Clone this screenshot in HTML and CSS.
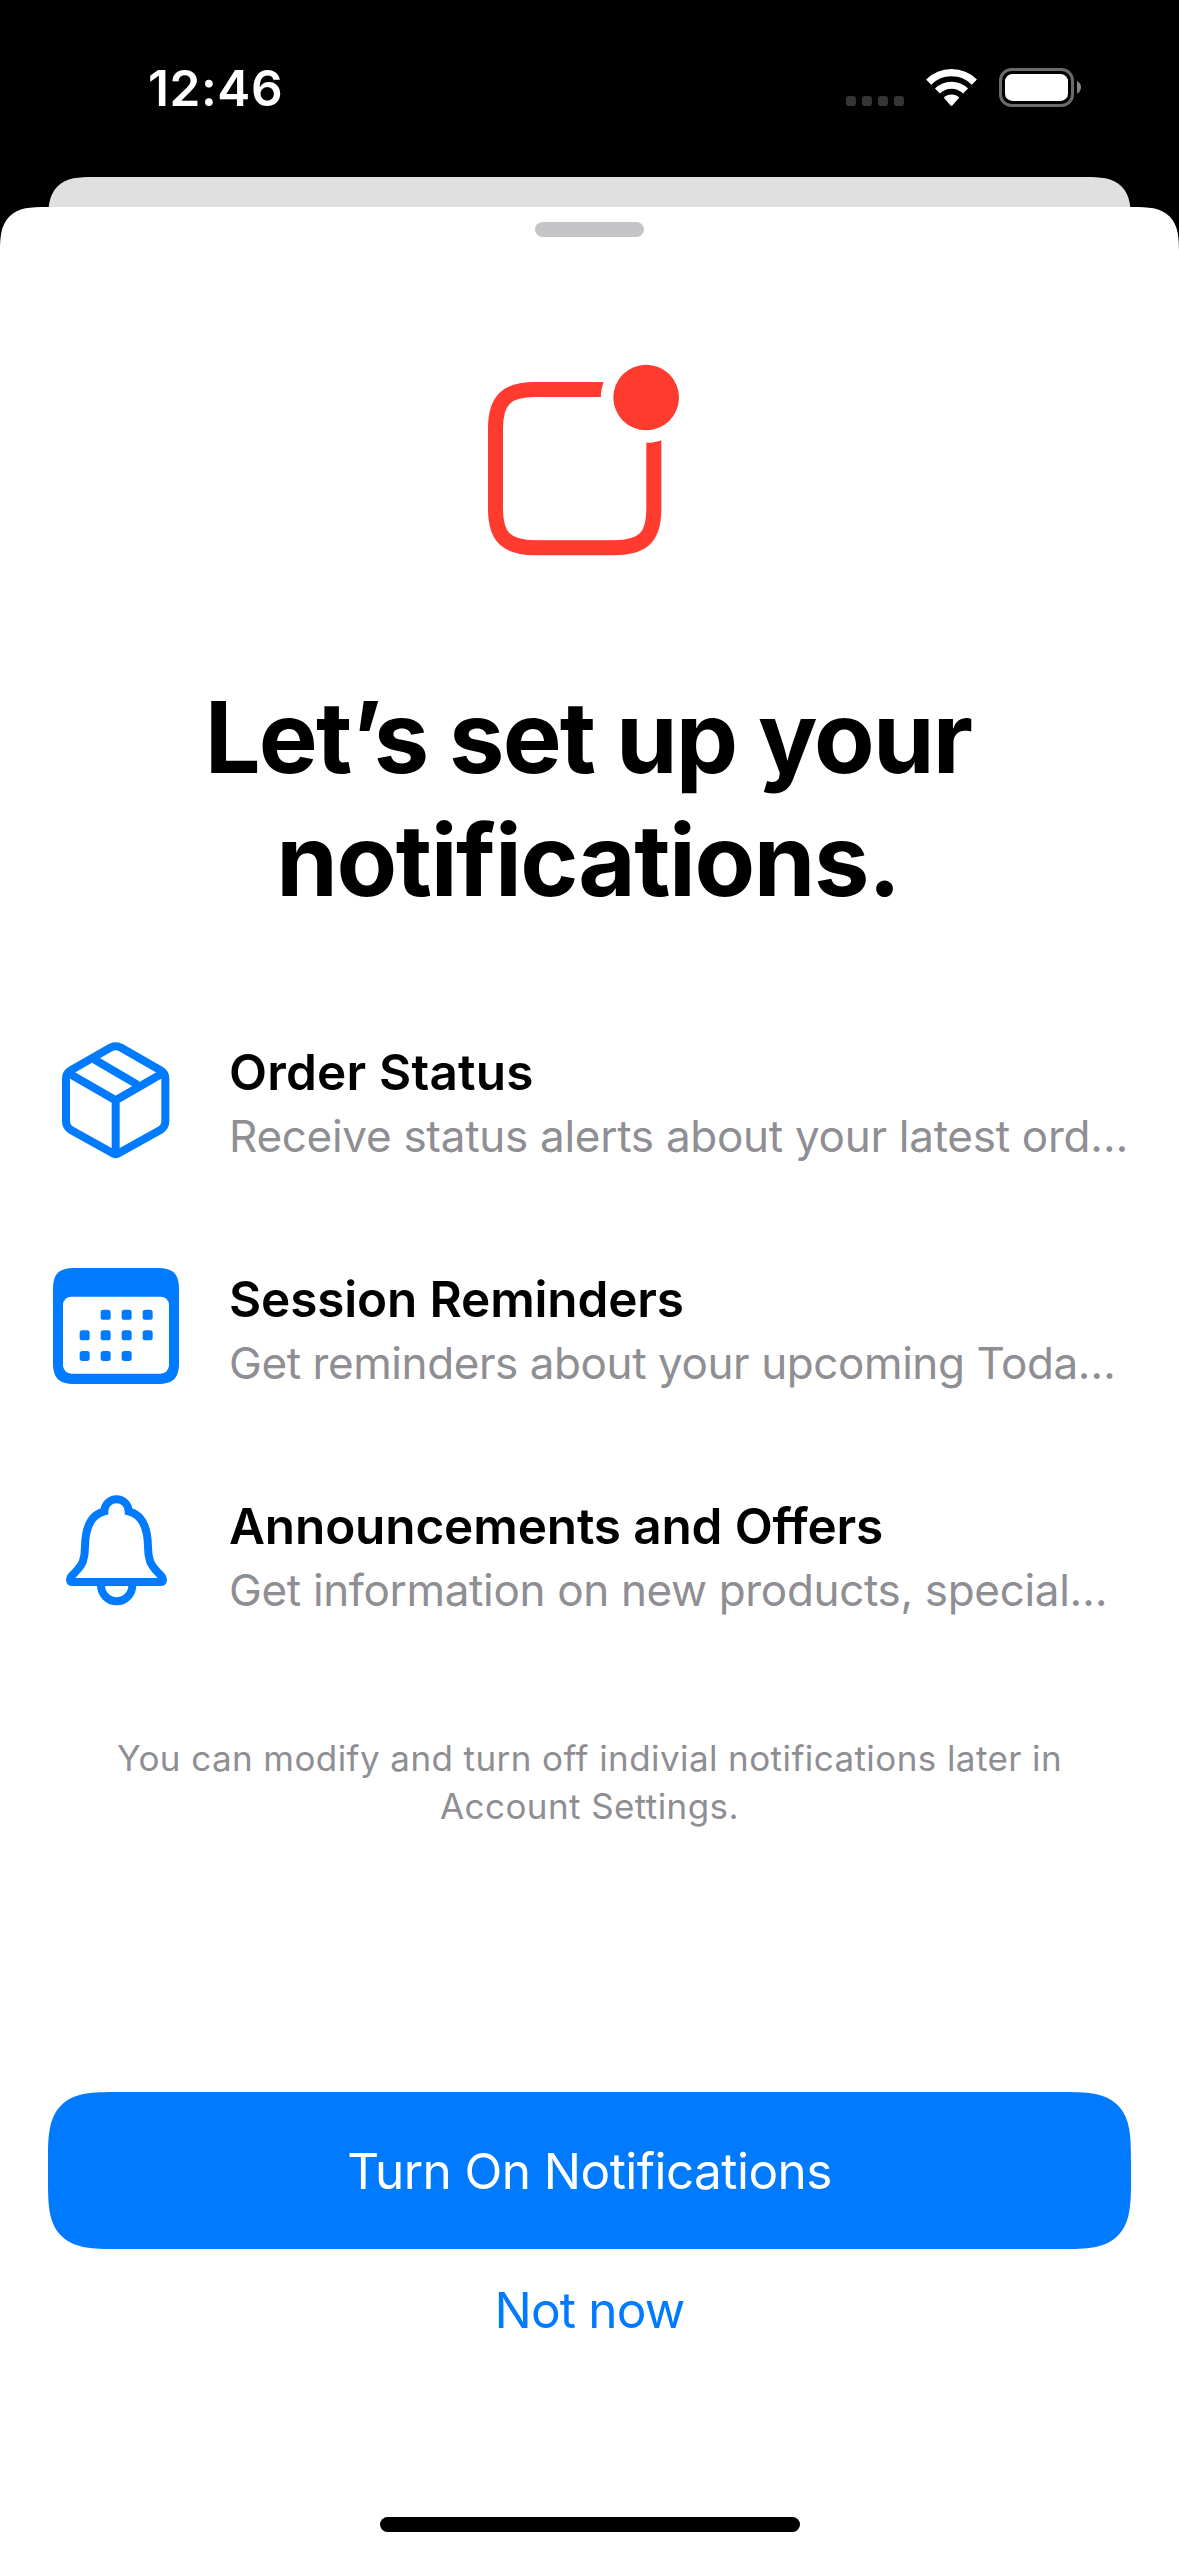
FILE: index.html
```html
<!DOCTYPE html>
<html lang="en">
<head>
<meta charset="utf-8">
<title>Notifications</title>
<link rel="stylesheet" href="styles.css">
</head>
<body>
<div class="status-bar">
  <span class="time">12:46</span>
  <svg class="status-icons" viewBox="189 78 723 126" aria-hidden="true">
    <g fill="#363636">
      <rect x="198" y="168" width="30" height="30" rx="10"/>
      <rect x="246" y="168" width="30" height="30" rx="10"/>
      <rect x="294" y="168" width="30" height="30" rx="10"/>
      <rect x="342" y="168" width="30" height="30" rx="10"/>
    </g>
    <g fill="none" stroke="#fff">
      <path stroke-width="22" d="M445.9 126.4A97 97 0 0 1 583.1 126.4"/>
      <path stroke-width="21" d="M472.4 152.9A59.5 59.5 0 0 1 556.6 152.9"/>
    </g>
    <path fill="#fff" d="M491.5 173.5A32 32 0 0 1 537.5 173.5L517 196.5Q514.5 199 512 196.5Z"/>
    <rect x="661.5" y="88.500" width="216" height="108" rx="33" fill="none" stroke="#6b6b6b" stroke-width="9"/>
    <rect x="675" y="102" width="189" height="81" rx="22" fill="#fff"/>
    <path fill="#858585" d="M891 123Q903 129 903 142T891 161Z"/>
  </svg>
</div>
<div class="back-sheet"></div>
<main class="sheet">
  <div class="grabber"></div>
  <svg class="hero-icon" viewBox="72 72 633 576" aria-hidden="true">
    <path fill="none" stroke="#ff3b30" stroke-width="45" d="M440 148.500H225C140 148.500 106.500 180 106.500 265V507C106.500 592 140 623 225 623H464C549 623 581.500 592 581.500 507V280"/>
    <circle cx="558.500" cy="172.500" r="136" fill="#fff"/>
    <circle cx="558.500" cy="172.500" r="98.500" fill="#ff3b30"/>
  </svg>
  <h1 class="title">Let’s set up your<br><span class="title-end">notifications.</span></h1>
  <ul class="features">
    <li class="feature order">
      <svg class="feature-icon" viewBox="36 60 384 360" aria-hidden="true">
        <g fill="none" stroke="#007aff" stroke-width="24">
          <path d="M241 82L360 150Q376 159 376 176V304Q376 321 361 330L233 401Q227 404 221 401L93 330Q78 321 78 304V176Q78 159 94 150L213 82Q227 76 241 82Z"/>
          <path d="M86 160L227 241L368 160M227 241V395M163 118.500L292 194"/>
        </g>
      </svg>
      <div class="feature-text">
        <h2>Order Status</h2>
        <p>Receive status alerts about your latest ord…</p>
      </div>
    </li>
    <li class="feature session">
      <svg class="feature-icon" viewBox="36 51 384 360" aria-hidden="true">
        <path fill="#007aff" d="M102 54H354C399 54 417 72 417 117V339C417 384 399 402 354 402H102C57 402 39 384 39 339V117C39 72 57 54 102 54Z"/>
        <rect x="69" y="140" width="318" height="231" rx="25" fill="#fff"/>
        <g fill="#007aff">
          <rect x="182" y="179.500" width="30" height="30" rx="8"/>
          <rect x="245" y="179.500" width="30" height="30" rx="8"/>
          <rect x="308" y="179.500" width="30" height="30" rx="8"/>
          <rect x="119" y="241" width="30" height="30" rx="8"/>
          <rect x="182" y="241" width="30" height="30" rx="8"/>
          <rect x="245" y="241" width="30" height="30" rx="8"/>
          <rect x="308" y="241" width="30" height="30" rx="8"/>
          <rect x="119" y="303" width="30" height="30" rx="8"/>
          <rect x="182" y="303" width="30" height="30" rx="8"/>
          <rect x="245" y="303" width="30" height="30" rx="8"/>
        </g>
      </svg>
      <div class="feature-text">
        <h2>Session Reminders</h2>
        <p>Get reminders about your upcoming Toda…</p>
      </div>
    </li>
    <li class="feature offers">
      <svg class="feature-icon" viewBox="36 42 384 360" aria-hidden="true">
        <g fill="none" stroke="#007aff" stroke-width="24">
          <path d="M98 306H361C371 306 371 296 364 288C350 272 336 262 330 243C325 228 324 216 324 200C323 140 304 103 266 94A36.500 36.500 0 0 0 193 94C155 103 136 140 135 200C135 216 134 228 129 243C123 262 109 272 95 288C88 296 88 306 98 306Z"/>
          <path d="M183 316A47 48 0 0 0 277 316"/>
        </g>
      </svg>
      <div class="feature-text">
        <h2>Announcements and Offers</h2>
        <p>Get information on new products, special…</p>
      </div>
    </li>
  </ul>
  <p class="note">You can modify and turn off indivial notifications later in<br>Account Settings.</p>
  <div class="actions">
    <button class="primary">Turn On Notifications</button>
    <button class="secondary">Not now</button>
  </div>
  <div class="home-indicator"></div>
</main>
</body>
</html>
```
FILE: styles.css
```css
* {
  box-sizing: border-box;
  margin: 0;
  padding: 0;
}

body {
  width: 1179px;
  height: 2556px;
  display: flex;
  flex-direction: column;
  background: #000;
  font-family: Inter, "Liberation Sans", sans-serif;
  overflow: hidden;
}

.status-bar {
  height: 177px;
  display: flex;
  justify-content: space-between;
  padding: 58px 95px 0 148px;
  color: #fff;
}

.time {
  font-size: 49.5px;
  font-weight: 600;
  line-height: 60px;
  letter-spacing: 0.6px;
}

.status-icons {
  width: 241px;
  height: 42px;
  margin-top: 8px;
}

/* The sheet below peeks out 30px above the active one */
.back-sheet {
  flex: none;
  height: 90px;
  margin: 0 48px -60px;
  border-radius: 46px 46px 0 0;
  corner-shape: superellipse(1.6);
  background: #e0e0e0;
}

.sheet {
  flex: 1;
  display: flex;
  flex-direction: column;
  align-items: center;
  padding-top: 15px;
  border-radius: 46px 46px 0 0;
  corner-shape: superellipse(1.6);
  background: #fff;
}

.grabber {
  width: 109px;
  height: 15px;
  border-radius: 8px;
  background: #c5c5c7;
}

.hero-icon {
  width: 211px;
  height: 192px;
  margin-top: 127px;
}

.title {
  margin-top: 120px;
  padding-right: 3px;
  font-size: 99px;
  font-weight: 700;
  line-height: 123px;
  letter-spacing: -1.8px;
  text-align: center;
}

.title-end {
  letter-spacing: -1.4px;
}

.features {
  width: 100%;
  margin-top: 118px;
  padding: 0 48px 0 52px;
  display: flex;
  flex-direction: column;
  gap: 99px;
  list-style: none;
}

.feature {
  height: 128px;
  display: flex;
  align-items: flex-start;
  gap: 49px;
}

.feature-icon {
  flex: none;
  width: 128px;
  height: 120px;
}

.feature-text {
  white-space: nowrap;
}

.feature-text h2 {
  font-size: 49.5px;
  font-weight: 600;
  line-height: 64px;
  letter-spacing: -0.15px;
}

.feature-text p {
  font-size: 44px;
  line-height: 64px;
  letter-spacing: -0.34px;
  color: #8e8e93;
}

.order h2 {
  letter-spacing: 0.2px;
}

.order p {
  letter-spacing: -0.28px;
}

.session p {
  letter-spacing: -0.42px;
}

.note {
  margin-top: 112px;
  font-size: 35px;
  line-height: 48px;
  letter-spacing: 0.42px;
  text-align: center;
  color: #8e8e93;
}

.actions {
  width: 100%;
  margin-top: 262px;
  padding: 0 48px;
  display: flex;
  flex-direction: column;
  align-items: center;
  gap: 31px;
}

.actions button {
  border: 0;
  font: 400 49.5px/60px Inter, "Liberation Sans", sans-serif;
  letter-spacing: -0.57px;
}

.primary {
  width: 100%;
  height: 157px;
  border-radius: 69px;
  corner-shape: superellipse(1.7);
  background: #007aff;
  color: #fff;
}

.actions .secondary {
  background: none;
  color: #007aff;
  letter-spacing: -0.8px;
}

.home-indicator {
  width: 420px;
  height: 15px;
  margin-top: auto;
  margin-bottom: 24px;
  border-radius: 8px;
  background: #000;
}
```
